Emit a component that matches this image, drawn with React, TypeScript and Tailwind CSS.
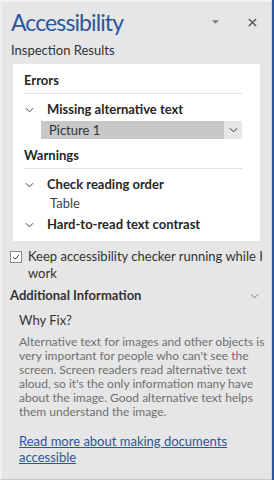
import React from 'react';

const Chevron: React.FC<{ className?: string }> = ({ className }) => (
  <svg viewBox="0 0 10 6" className={className} fill="none" stroke="currentColor" strokeWidth="1.1">
    <path d="M1 1l4 4 4-4" />
  </svg>
);

const Item: React.FC<{ label: string; children?: React.ReactNode }> = ({ label, children }) => (
  <div>
    <div className="flex items-center h-[20px]">
      <Chevron className="w-[9px] h-[6px] text-[#444] ml-[1px]" />
      <span className="ml-[13px] font-bold text-[13px] text-[#262626]">{label}</span>
    </div>
    {children}
  </div>
);

const App: React.FC = () => {
  return (
    <div
      className="w-[274px] h-[480px] bg-[#e6e6e6] flex overflow-hidden"
      style={{ fontFamily: 'Lato, "Noto Sans", sans-serif' }}
    >
      <div className="flex-1 block border-l-2 border-[#f0f0f0] border-t-2 border-t-[#f3f3f3] border-b border-b-[#c8c8c8] border-r border-r-[#d0d0d0]">
        {/* header */}
        <div className="flex items-center h-[38px] pl-[9px] pr-[14px] pt-[2px]">
          <h1 className="text-[23px] text-[#2b579a] leading-none flex-1 tracking-[-0.9px]">Accessibility</h1>
          <svg viewBox="0 0 8 4" className="w-[7px] h-[4px] text-[#7a7a7a] mr-[29px]" fill="currentColor">
            <path d="M0 0h8L4 4z" />
          </svg>
          <svg viewBox="0 0 10 10" className="w-[9px] h-[9px] text-[#555]" stroke="currentColor" strokeWidth="1.6">
            <path d="M1 1l8 8M9 1l-8 8" />
          </svg>
        </div>
        <div className="pl-[9px] text-[13px] text-[#333] leading-[16px] mt-[2px]">Inspection Results</div>

        {/* results box */}
        <div className="mt-[6px] mx-[11px] bg-white pt-[7px] pb-[6px] pl-[11px] pr-[18px]">
          <div className="font-bold text-[13px] text-[#262626] leading-[18px]">Errors</div>
          <div className="h-px bg-[#e1e1e1] mt-[4px] mb-[6px]" />
          <Item label="Missing alternative text">
            <div className="flex ml-[17px] h-[18px] mt-[1px]">
              <div className="flex-1 bg-[#c8c8c8] text-[13px] text-[#333] pl-[8px] leading-[18px]">Picture 1</div>
              <div className="w-[18px] bg-[#e6e6e6] flex items-center justify-center">
                <Chevron className="w-[9px] h-[6px] text-[#333]" />
              </div>
            </div>
          </Item>
          <div className="font-bold text-[13px] text-[#262626] leading-[18px] mt-[7px]">Warnings</div>
          <div className="h-px bg-[#e1e1e1] mt-[4px] mb-[6px]" />
          <Item label="Check reading order">
            <div className="ml-[26px] text-[13px] text-[#444] leading-[18px] mt-[-1px]">Table</div>
          </Item>
          <div className="mt-[3px]">
            <Item label="Hard-to-read text contrast" />
          </div>
        </div>

        {/* checkbox */}
        <div className="flex items-start mt-[9px] pl-[8px] pr-[8px]">
          <div className="w-[12px] h-[12px] bg-white border border-[#8a8a8a] flex items-center justify-center mt-[1px] shrink-0">
            <svg viewBox="0 0 10 8" className="w-[8px] h-[6px]" fill="none" stroke="#333" strokeWidth="1.3">
              <path d="M1 4l3 3 5-6" />
            </svg>
          </div>
          <div className="ml-[6px] text-[13px] text-[#333] leading-[17px] mt-[-2px]">
            Keep accessibility checker running while I work
          </div>
        </div>

        {/* additional info */}
        <div className="flex items-center mt-[4px] pl-[8px] pr-[12px] h-[20px]">
          <span className="flex-1 font-bold text-[13px] text-[#333]">Additional Information</span>
          <Chevron className="w-[9px] h-[6px] text-[#777]" />
        </div>
        <div className="pl-[17px] pr-[6px]">
          <div className="text-[13px] text-[#333] leading-[17px] mt-[6px]">Why Fix?</div>
          <p className="text-[12px] text-[#707070] leading-[14px] mt-[6px]">
            Alternative text for images and other objects is very important for people who can't see the screen. Screen
            readers read alternative text aloud, so it's the only information many have about the image. Good alternative
            text helps them understand the image.
          </p>
          <a href="#" className="block mt-[14px] pr-[8px] text-[13px] text-[#2b579a] underline leading-[16px]">
            Read more about making documents accessible
          </a>
        </div>
      </div>
      <div className="w-[2px] bg-[#2b579a]" />
    </div>
  );
};

export default App;
